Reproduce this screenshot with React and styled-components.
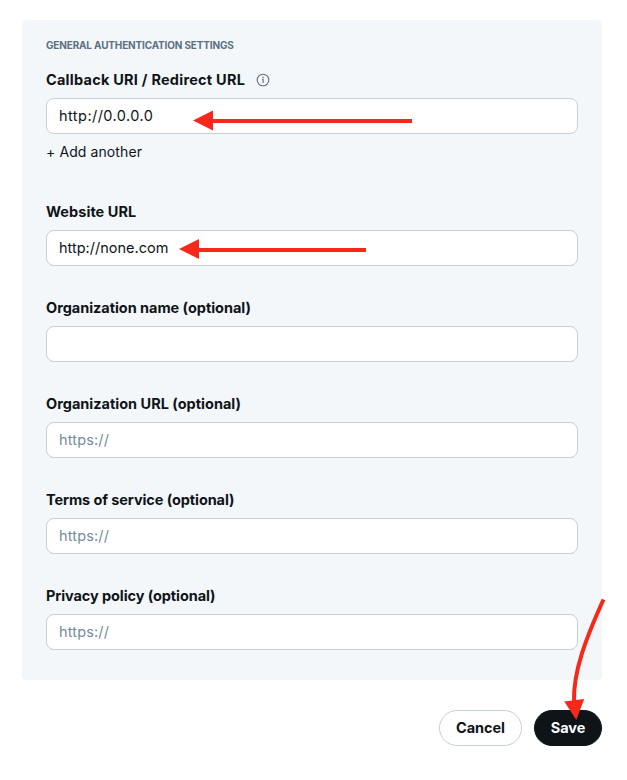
import React from "react";
import styled, { createGlobalStyle } from "styled-components";

const GlobalStyle = createGlobalStyle`
  * { box-sizing: border-box; }
  body {
    margin: 0;
    background: #ffffff;
    color: #0f1419;
    font-family: Inter, "Liberation Sans", sans-serif;
    -webkit-font-smoothing: antialiased;
  }
`;

const Page = styled.main`
  position: relative;
  width: 627px;
  height: 780px;
  padding: 20px 25px 0 22px;
  overflow: hidden;
`;

const Panel = styled.section`
  display: flex;
  flex-direction: column;
  height: 660px;
  padding: 15px 24px 0;
  border-radius: 4px;
  background: #f3f7fa;
`;

const Heading = styled.h2`
  margin: 0 0 15px;
  font-size: 10px;
  font-weight: 700;
  line-height: 20px;
  letter-spacing: -0.16px;
  color: #5b7083;
  text-transform: uppercase;
  white-space: nowrap;
`;

const Fields = styled.div`
  display: flex;
  flex-direction: column;
  gap: 32px;
`;

const Field = styled.div`
  display: flex;
  flex-direction: column;
  align-items: flex-start;
`;

const LabelRow = styled.div`
  display: flex;
  align-items: center;
  gap: 11px;
  height: 20px;
  margin-bottom: 8px;
`;

const Label = styled.label`
  font-size: 14.5px;
  font-weight: 700;
  line-height: 20px;
  letter-spacing: ${(p) => p.$tracking}px;
  white-space: nowrap;
`;

const Input = styled.input`
  width: 100%;
  height: 36px;
  padding: 0 12px 2px;
  border: 1px solid #c4d1d8;
  border-radius: 8px;
  outline: none;
  background: #ffffff;
  color: #0f1419;
  font: 400 14.5px/20px Inter, "Liberation Sans", sans-serif;
  letter-spacing: ${(p) => p.$tracking}px;

  &::placeholder {
    color: #768c9e;
    opacity: 1;
  }
`;

const AddButton = styled.button`
  height: 20px;
  margin: 8px 0;
  padding: 0;
  border: 0;
  background: transparent;
  color: #0f1419;
  font: 400 14px/20px Inter, "Liberation Sans", sans-serif;
  letter-spacing: 0.1px;
`;

const Actions = styled.div`
  display: flex;
  justify-content: flex-end;
  gap: 12px;
  margin-top: 30px;
`;

const Button = styled.button`
  width: ${(p) => (p.$primary ? 68 : 83)}px;
  height: 36px;
  padding: 0;
  border: 1px solid ${(p) => (p.$primary ? "#0f1419" : "#c4d1d8")};
  border-radius: 18px;
  background: ${(p) => (p.$primary ? "#0f1419" : "#ffffff")};
  color: ${(p) => (p.$primary ? "#ffffff" : "#0f1419")};
  font: 700 14.5px/20px Inter, "Liberation Sans", sans-serif;
  letter-spacing: -0.05px;
`;

const Annotations = styled.svg`
  position: absolute;
  inset: 0;
  pointer-events: none;
`;

const InfoIcon = () => (
  <svg width="14" height="14" viewBox="0 0 14 14" fill="none" aria-hidden="true">
    <circle cx="7" cy="7" r="5.8" stroke="#5b7083" strokeWidth="1.1" />
    <circle cx="7" cy="4.3" r="0.8" fill="#5b7083" />
    <path d="M6.1 6.4H7.1V10" stroke="#5b7083" strokeWidth="1.15" />
  </svg>
);

const fields = [
  { id: "callback", label: "Callback URI / Redirect URL", value: "http://0.0.0.0", info: true, add: true, tracking: 0.24, textTracking: 0.45 },
  { id: "website", label: "Website URL", value: "http://none.com", tracking: 0.05, textTracking: 0 },
  { id: "org-name", label: "Organization name (optional)", tracking: -0.04, textTracking: 0 },
  { id: "org-url", label: "Organization URL (optional)", placeholder: "https://", tracking: 0, textTracking: 0.15 },
  { id: "terms", label: "Terms of service (optional)", placeholder: "https://", tracking: -0.09, textTracking: 0.15 },
  { id: "privacy", label: "Privacy policy (optional)", placeholder: "https://", tracking: -0.09, textTracking: 0.15 },
];

export default function App() {
  return (
    <>
      <GlobalStyle />
      <Page>
        <Panel>
          <Heading>General authentication settings</Heading>
          <Fields>
            {fields.map((f) => (
              <Field key={f.id}>
                <LabelRow>
                  <Label htmlFor={f.id} $tracking={f.tracking}>{f.label}</Label>
                  {f.info && <InfoIcon />}
                </LabelRow>
                <Input id={f.id} defaultValue={f.value} placeholder={f.placeholder} $tracking={f.textTracking} />
                {f.add && <AddButton type="button">+ Add another</AddButton>}
              </Field>
            ))}
          </Fields>
        </Panel>
        <Actions>
          <Button type="button">Cancel</Button>
          <Button type="button" $primary>Save</Button>
        </Actions>
        <Annotations width="627" height="780" viewBox="0 0 627 780" aria-hidden="true">
          <g fill="#f5281b">
            <path d="M193 120.5L213 110.5V119H412V123H213V130.5Z" />
            <path d="M179 249L199 239V248H366V252H199V259Z" />
            <path d="M564.3 701.5L584.2 699L576.3 720Z" />
          </g>
          <path d="M603.5 599.5C586 638 573 672 574 702" fill="none" stroke="#f5281b" strokeWidth="4" />
        </Annotations>
      </Page>
    </>
  );
}
